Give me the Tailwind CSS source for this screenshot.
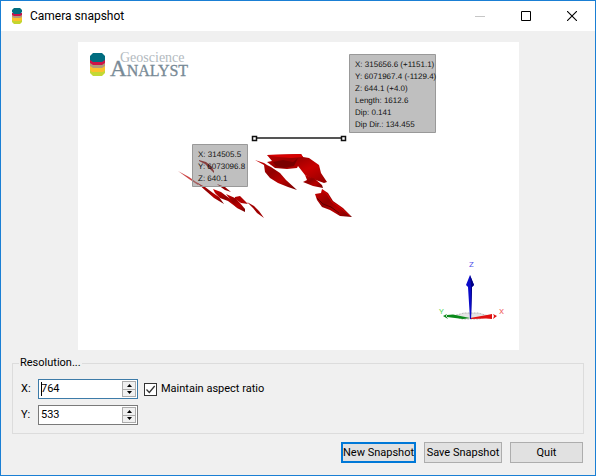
<!DOCTYPE html>
<html lang="en">
<head>
<meta charset="utf-8">
<meta name="viewport" content="width=device-width, initial-scale=1">
<title>Camera snapshot</title>
<script src="https://cdn.jsdelivr.net/npm/@tailwindcss/browser@4"></script>
</head>
<body>
<div class="flex min-h-screen flex-col border border-[#1a7fd4] bg-[#f0f0f0] font-['Roboto','Noto_Sans',sans-serif] text-[11px] leading-[14px] text-black">

  <header class="flex h-[30px] items-center bg-white pl-[10px]">
    <svg class="h-4 w-3 shrink-0" viewBox="0 0 12 16" aria-hidden="true">
      <path fill="#c3d52f" d="M1 11h10v3l-2 2H3l-2-2z"/>
      <path fill="#fcc12c" d="M1 9h10v3l-2 1H3l-2-1z"/>
      <path fill="#b39b78" d="M1 7h10v2l-2 1H3L1 9z"/>
      <path fill="#c9104b" d="M1 5h10v2L9 8H3L1 7z"/>
      <path fill="#006d80" d="M3 0h6l2 2v2L9 6H3L1 4V2z"/>
    </svg>
    <h1 class="ml-[7px] flex-1 text-[12px] leading-4">Camera snapshot</h1>
    <div class="flex self-stretch">
      <button type="button" disabled aria-label="Minimize" class="grid w-[46px] place-items-center">
        <svg class="size-[10px]" viewBox="0 0 10 10"><path fill="#c6c6c6" d="M0 5h10v1H0z"/></svg>
      </button>
      <button type="button" aria-label="Maximize" class="grid w-[46px] place-items-center">
        <svg class="size-[10px]" viewBox="0 0 10 10"><path fill="none" stroke="#000" d="M.5.5h9v9h-9z"/></svg>
      </button>
      <button type="button" aria-label="Close" class="grid w-[46px] place-items-center">
        <svg class="size-[10px]" viewBox="0 0 10 10"><path stroke="#000" stroke-width="1.1" d="M0 0l10 10M10 0L0 10"/></svg>
      </button>
    </div>
  </header>

  <main class="flex flex-1 flex-col px-[11px] pt-[11px]">
    <div class="pr-[65px] pl-[66px]">
      <svg class="block h-auto w-full bg-white" viewBox="78 42 441 308" role="img" aria-label="3D scene preview">
        <defs>
          <linearGradient id="red" x1="0" y1="0" x2="1" y2="1">
            <stop offset="0" stop-color="#d00000"/><stop offset=".4" stop-color="#900000"/><stop offset=".65" stop-color="#b80000"/><stop offset="1" stop-color="#700000"/>
          </linearGradient>
          <linearGradient id="ridge" x1="0" y1="0" x2="1" y2="1">
            <stop offset="0" stop-color="#c00000"/><stop offset=".3" stop-color="#960000"/><stop offset=".6" stop-color="#c80000"/><stop offset="1" stop-color="#900000"/>
          </linearGradient>
        </defs>

        <!-- Logo -->
        <path fill="#c3d935" d="M90 69h15v4l-3 3h-9l-3-3z"/>
        <path fill="#fcc12c" d="M90 66h15v4l-2 2H92l-2-2z"/>
        <path fill="#b39b78" d="M90 63h15v3l-3 2h-9l-3-2z"/>
        <path fill="#cf1247" d="M90 60h15v3l-3 2h-9l-3-2z"/>
        <path fill="#006d80" d="M93 53h9l3 3v4l-3 2h-9l-3-2v-4z"/>
        <g font-family="'Liberation Serif', serif">
          <text x="120" y="62" font-size="14" fill="#b3bac0">Geoscience</text>
          <text x="110" y="76" font-size="23" fill="#788a96" stroke="#788a96" stroke-width=".3">A<tspan font-size="16">NALYST</tspan></text>
        </g>

        <!-- Ore bodies, left cluster -->
        <g fill="#a00000">
          <path fill="#900000" d="M199 160l7 2 5 4 3 5v2l-5-5-4-4-6-3z"/>
          <path fill="#cc4444" d="M178 171l11 6 10 7-1 1-9-6z"/>
          <path fill="url(#red)" d="M196 182l9 5 8 6 6 4 5 7-10-6-8-7z"/>
          <path fill="#900000" d="M217 184l8 3 6 5-6-2-7-5z"/>
          <path fill="url(#red)" d="M213 189l8 3 8 6 8 5 5 4 3 4-9-4-8-6-8-3-5-5z"/>
          <path fill="url(#red)" d="M226 194l9 4 5 5 5 6v3l-8-4-5-6z"/>
          <path fill="#b00000" d="M235 197l5-1 5 5 3 3-7-1-6-4z"/>
          <path d="M247 202l7 4 5 5 5 7-7-5-4-5z"/>
        </g>

        <!-- Ore bodies, right cluster -->
        <path fill="url(#red)" d="M255 160l9 3 3 2 4 2 9 6 6 7 11 10-9-3-10-4-8-5-5-6-1-7z"/>
        <path fill="url(#ridge)" d="M267 155l34-1 2 3 6 1 10 7 2 8 6 9-3 1-11-4-8-4-7-9-1 2-10 1-12-1-8-6 5-1z"/>
        <path fill="#d80000" d="M267 155l34-1 2 3-12 1-13-1z"/>
        <path fill="#7a0000" d="M273 162l10-2 10 2 5-4-4 8-10 2-8-2z"/>
        <path fill="url(#red)" d="M305 175l3 1 7 3 7 6 1 3-10-2-10-4 4-2z"/>
        <path fill="url(#red)" d="M322 189l6 4 5 8 10 7 9 9-12-1-10-6-8-3-5-7-2-6 6-1z"/>
        <path fill="none" stroke="#d80000" d="M322 190l5 4 5 8 10 7 8 7"/>
        <path fill="none" stroke="#600000" d="M317 198l6 6 8 3 8 6"/>

        <!-- Ruler -->
        <path fill="none" stroke="#555" stroke-width="2" d="M256 138h86"/>
        <path fill="#fff" stroke="#111" stroke-width="1.500" d="M252.500 136.500h4v4h-4zM341.500 136.500h4v4h-4z"/>

        <!-- Coordinate labels -->
        <path fill="#808080" fill-opacity=".5" stroke="#999" d="M192.500 144.500h55v42h-55zM349.500 54.500h86v78h-86z"/>
        <g font-family="'Liberation Sans', Arial, sans-serif" font-size="8" text-rendering="geometricPrecision" fill="#111">
          <text x="198" y="157">X: 314505.5</text>
          <text x="198" y="169">Y: 6073096.8</text>
          <text x="198" y="181">Z: 640.1</text>
          <text x="355" y="67">X: 315656.6 (+1151.1)</text>
          <text x="355" y="79">Y: 6071967.4 (-1129.4)</text>
          <text x="355" y="91">Z: 644.1 (+4.0)</text>
          <text x="355" y="103">Length: 1612.6</text>
          <text x="355" y="115">Dip: 0.141</text>
          <text x="355" y="127">Dip Dir.: 134.455</text>
        </g>

        <!-- Axes -->
        <path fill="#e4e4e4" stroke="#aaa" stroke-width=".8" stroke-dasharray="2 1" d="M453 316l11-3h14l11 3-10 3h-17z"/>
        <path fill="#0a8a1a" d="M443 316l4-2-1 2 2 3zM447 315l6-.500 17 3.500-7 1-16-2z"/>
        <path fill="#e01010" d="M470 318l17-3 5-1v5l-6-.500-16 .500zM493 314l4 2-4 3 1-3z"/>
        <path fill="#0a0ac8" d="M470 275l4 10-2 2-1 32h-1l-2-32-2-2z"/>
        <path fill="#000080" d="M470 275l4 10-2 2-1 32V286z"/>
        <g font-family="Roboto, Arial, sans-serif" font-size="8">
          <text x="469" y="267" fill="#5050e8">Z</text>
          <text x="439" y="314" fill="#60d860">Y</text>
          <text x="499" y="314" fill="#f06060">X</text>
        </g>
      </svg>
    </div>

    <fieldset class="mt-[6px] border border-[#dcdcdc] px-[8px] pb-[8px]">
      <legend class="-ml-[2px] px-[1px]">Resolution...</legend>
      <div class="grid grid-cols-[17px_100px_1fr] items-center gap-y-[6px] pt-[9px]">
        <label for="res-x">X:</label>
        <div class="relative flex h-5 border border-[#3d7ba8] bg-white p-px">
          <input id="res-x" type="text" inputmode="numeric" value="764" class="min-w-0 flex-1 pl-[1px] leading-4 outline-none">
          <span class="absolute top-[2px] left-[2px] h-[14px] w-px bg-black" aria-hidden="true"></span>
          <div class="flex w-[14px] flex-col">
            <button type="button" aria-label="Increase X" class="grid flex-1 place-items-center border border-[#acacac] bg-[#f0f0f0]"><svg class="h-[3px] w-[5px]" viewBox="0 0 5 3"><path d="M0 3h5L2.500 0z"/></svg></button>
            <button type="button" aria-label="Decrease X" class="-mt-px grid flex-1 place-items-center border border-[#acacac] bg-[#f0f0f0]"><svg class="h-[3px] w-[5px]" viewBox="0 0 5 3"><path d="M0 0h5L2.500 3z"/></svg></button>
          </div>
        </div>
        <label class="flex items-center gap-[4px] pl-[6px]">
          <span class="relative grid size-[13px] place-items-center">
            <input type="checkbox" checked class="peer size-[13px] appearance-none border border-[#333] bg-white">
            <svg class="pointer-events-none invisible absolute size-[13px] peer-checked:visible" viewBox="0 0 13 13"><path fill="none" stroke="#333" stroke-width="1.300" d="M2.500 6.500l2.800 3L10.700 3"/></svg>
          </span>
          Maintain aspect ratio
        </label>
        <label for="res-y">Y:</label>
        <div class="flex h-5 border border-[#7a7a7a] bg-white p-px">
          <input id="res-y" type="text" inputmode="numeric" value="533" class="min-w-0 flex-1 pl-[1px] leading-4 outline-none">
          <div class="flex w-[14px] flex-col">
            <button type="button" aria-label="Increase Y" class="grid flex-1 place-items-center border border-[#acacac] bg-[#f0f0f0]"><svg class="h-[3px] w-[5px]" viewBox="0 0 5 3"><path d="M0 3h5L2.500 0z"/></svg></button>
            <button type="button" aria-label="Decrease Y" class="-mt-px grid flex-1 place-items-center border border-[#acacac] bg-[#f0f0f0]"><svg class="h-[3px] w-[5px]" viewBox="0 0 5 3"><path d="M0 0h5L2.500 3z"/></svg></button>
          </div>
        </div>
      </div>
    </fieldset>

    <div class="mt-[8px] flex justify-end gap-[8px] pr-px pb-[12px]">
      <button type="button" class="h-[21px] w-[75px] border-2 border-[#0078d7] bg-[#e1e1e1] whitespace-nowrap">New Snapshot</button>
      <button type="button" class="h-[21px] w-[78px] border border-[#adadad] bg-[#e1e1e1] whitespace-nowrap">Save Snapshot</button>
      <button type="button" class="h-[21px] w-[73px] border border-[#adadad] bg-[#e1e1e1]">Quit</button>
    </div>
  </main>
</div>
</body>
</html>
